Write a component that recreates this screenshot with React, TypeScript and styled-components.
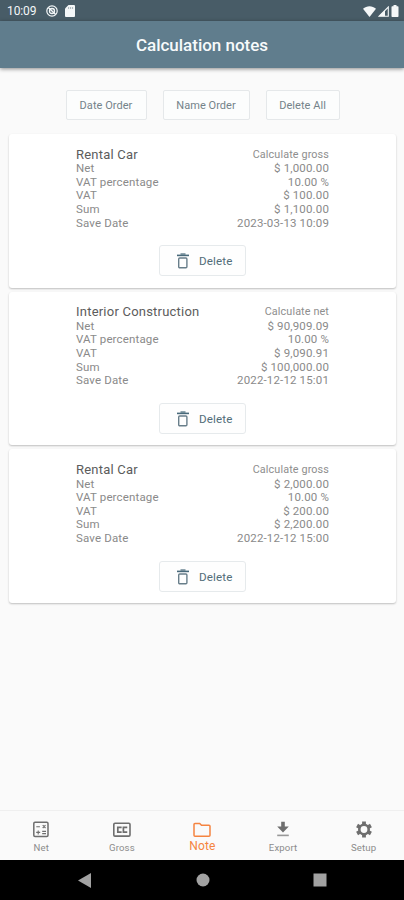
import React from "react";
import styled, { createGlobalStyle } from "styled-components";

const GlobalStyle = createGlobalStyle`
  * { box-sizing: border-box; }
  body { margin: 0; background: #fafafa; font-family: Roboto, sans-serif; }
  button { font-family: inherit; margin: 0; padding: 0; }
`;

const Screen = styled.div`
  width: 404px;
  height: 900px;
  display: flex;
  flex-direction: column;
  overflow: hidden;
  background: #fafafa;
`;

const StatusBar = styled.div`
  height: 21px;
  flex: none;
  display: flex;
  align-items: center;
  padding: 1px 5px 0 7px;
  background: #485c67;
  color: #f4f7f8;
`;

const Clock = styled.span`
  width: 39px;
  font-size: 12px;
  letter-spacing: -0.1px;
`;

const StatusIcons = styled.div<{ $end?: boolean }>`
  display: flex;
  align-items: center;
  gap: ${(p) => (p.$end ? "2px" : "7px")};
  margin-left: ${(p) => (p.$end ? "auto" : "0")};
  svg { display: block; }
`;

const AppBar = styled.header`
  height: 47px;
  flex: none;
  display: flex;
  align-items: center;
  justify-content: center;
  background: #607d8d;
  box-shadow: 0 1px 4px rgba(0, 0, 0, 0.45);
`;

const Title = styled.h1`
  margin: 1px 0 0;
  font-size: 17px;
  line-height: 20px;
  font-weight: 500;
  letter-spacing: -0.02px;
  color: #f7fafb;
`;

const Content = styled.main`
  flex: 1;
  padding: 22px 8px 0 9px;
`;

const OrderBar = styled.div`
  display: flex;
  justify-content: center;
  gap: 16px;
  margin-bottom: 14px;
`;

const OutlineButton = styled.button<{ $width: number }>`
  width: ${(p) => p.$width}px;
  height: 30px;
  display: flex;
  align-items: center;
  justify-content: center;
  border: 1px solid #e5e8ea;
  border-radius: 2px;
  background: #fcfdfd;
  color: #74838a;
  font-size: 11px;
  letter-spacing: 0.05px;
`;

const CardList = styled.div`
  display: flex;
  flex-direction: column;
  gap: 4px;
`;

const Card = styled.article`
  height: 153.7px;
  display: flex;
  flex-direction: column;
  align-items: center;
  padding-top: 12.6px;
  border-radius: 3px;
  background: #fff;
  box-shadow: 0 1px 2px rgba(0, 0, 0, 0.24);
`;

const Details = styled.div`
  width: 253px;
`;

const Row = styled.div<{ $heading?: boolean }>`
  height: ${(p) => (p.$heading ? "15.6px" : "13.6px")};
  display: flex;
  align-items: center;
  justify-content: space-between;
  line-height: 13.6px;
  font-size: 11.5px;
  letter-spacing: 0.15px;
  color: #8a8a8a;
  white-space: nowrap;
`;

const Name = styled.span`
  font-size: 13px;
  letter-spacing: 0.22px;
  color: #5c5c5c;
`;

const Mode = styled.span`
  font-size: 10.8px;
  letter-spacing: 0.12px;
  color: #8e8e8e;
`;

const Amount = styled.span`
  font-size: 11.5px;
  letter-spacing: 0.15px;
`;

const DeleteButton = styled.button`
  width: 87px;
  height: 31px;
  display: flex;
  align-items: center;
  gap: 9px;
  margin-top: 15px;
  padding: 1px 0 0 16px;
  border: 1px solid #e6eaec;
  border-radius: 3px;
  background: #fefefe;
  color: #526d79;
  font-size: 11.6px;
  letter-spacing: 0.15px;
  svg { display: block; }
`;

const TabBar = styled.nav`
  height: 50px;
  flex: none;
  display: grid;
  grid-template-columns: repeat(5, 1fr);
  padding-left: 1px;
  border-top: 1px solid #efefef;
`;

const Tab = styled.div<{ $active?: boolean }>`
  display: flex;
  flex-direction: column;
  align-items: center;
  padding-top: 9px;
  color: ${(p) => (p.$active ? "#f58440" : "#6e6e6e")};
  svg { display: block; width: 20px; height: 20px; }
`;

const TabLabel = styled.span<{ $active?: boolean }>`
  margin-top: ${(p) => (p.$active ? "0" : "1px")};
  font-size: ${(p) => (p.$active ? "12px" : "9.6px")};
  line-height: 13px;
  letter-spacing: 0.15px;
  color: ${(p) => (p.$active ? "#f58440" : "#8c8c8c")};
`;

const SystemBar = styled.div`
  height: 40px;
  flex: none;
  display: flex;
  align-items: center;
  justify-content: space-between;
  padding: 0 77px 0 78px;
  background: #000;
  svg { display: block; }
`;

const TrashIcon = () => (
  <svg width="14" height="16" viewBox="0 0 14 16" fill="none">
    <path d="M1 2.4h12" stroke="#48697a" strokeWidth="1.6" />
    <path d="M4.5 1h5" stroke="#48697a" strokeWidth="1.2" />
    <rect x="2.7" y="5" width="8.2" height="9.7" rx="1" stroke="#687e8a" strokeWidth="1.4" />
  </svg>
);

const CalculatorIcon = () => (
  <svg viewBox="0 0 20 20" fill="none" stroke="currentColor">
    <rect x="2.8" y="2.3" width="14.2" height="14.2" rx="1.2" strokeWidth="1.5" />
    <path d="M5.3 6.8h3.6M5.2 12.4h4M7.2 10.4v4M11.2 11.4h3.8M11.2 13.6h3.8M11.7 5.2l2.8 2.8M14.5 5.2l-2.8 2.8" strokeWidth="1.1" />
  </svg>
);

const CaptionIcon = () => (
  <svg viewBox="0 0 20 20" fill="none" stroke="currentColor">
    <rect x="1.8" y="3.2" width="16.2" height="12.9" rx="1.2" strokeWidth="1.6" />
    <path d="M8.8 8.2V7.3H5.8v4.8h3v-.9M14.4 8.2v-.9h-3v4.8h3v-.9" strokeWidth="1.7" />
  </svg>
);

const FolderIcon = () => (
  <svg viewBox="0 0 20 20" fill="none" stroke="currentColor">
    <path d="M3 3.4h4.7l1.8 1.8H17a1 1 0 0 1 1 1v9.1a1 1 0 0 1-1 1H3a1 1 0 0 1-1-1V4.4a1 1 0 0 1 1-1z" strokeWidth="1.5" />
  </svg>
);

const ExportIcon = () => (
  <svg viewBox="0 0 20 20" fill="currentColor">
    <path d="M8.2 1.8h3.6v4.8h4L10 12.6 4.2 6.6h4z" />
    <path d="M4.2 14.6h11.6v1.6H4.2z" opacity=".7" />
  </svg>
);

const GearIcon = () => (
  <svg viewBox="0 0 20 20" fill="none" stroke="currentColor">
    <circle cx="10" cy="9.5" r="4.7" strokeWidth="2.6" />
    <g strokeWidth="3.8">
      <path d="M10 1.5v3.2M10 14.3v3.2" />
      <path d="M10 1.5v3.2M10 14.3v3.2" transform="rotate(60 10 9.5)" />
      <path d="M10 1.5v3.2M10 14.3v3.2" transform="rotate(120 10 9.5)" />
    </g>
  </svg>
);

interface Note {
  name: string;
  mode: string;
  net: string;
  vat: string;
  sum: string;
  saved: string;
}

const notes: Note[] = [
  { name: "Rental Car", mode: "Calculate gross", net: "$ 1,000.00", vat: "$ 100.00", sum: "$ 1,100.00", saved: "2023-03-13 10:09" },
  { name: "Interior Construction", mode: "Calculate net", net: "$ 90,909.09", vat: "$ 9,090.91", sum: "$ 100,000.00", saved: "2022-12-12 15:01" },
  { name: "Rental Car", mode: "Calculate gross", net: "$ 2,000.00", vat: "$ 200.00", sum: "$ 2,200.00", saved: "2022-12-12 15:00" },
];

const tabs = [
  { label: "Net", icon: <CalculatorIcon /> },
  { label: "Gross", icon: <CaptionIcon /> },
  { label: "Note", icon: <FolderIcon />, active: true },
  { label: "Export", icon: <ExportIcon /> },
  { label: "Setup", icon: <GearIcon /> },
];

const NoteCard = ({ note }: { note: Note }) => {
  const rows = [
    ["Net", note.net],
    ["VAT percentage", "10.00 %"],
    ["VAT", note.vat],
    ["Sum", note.sum],
    ["Save Date", note.saved],
  ];
  return (
    <Card>
      <Details>
        <Row $heading>
          <Name>{note.name}</Name>
          <Mode>{note.mode}</Mode>
        </Row>
        {rows.map(([label, value]) => (
          <Row key={label}>
            <span>{label}</span>
            <Amount>{value}</Amount>
          </Row>
        ))}
      </Details>
      <DeleteButton>
        <TrashIcon />
        Delete
      </DeleteButton>
    </Card>
  );
};

export default function App() {
  return (
    <>
      <GlobalStyle />
      <Screen>
        <StatusBar>
          <Clock>10:09</Clock>
          <StatusIcons>
            <svg width="12" height="12" viewBox="0 0 12 12" fill="none" stroke="currentColor">
              <circle cx="6" cy="6" r="5.2" strokeWidth="1.2" />
              <circle cx="6" cy="6" r="2.5" strokeWidth="1.3" />
              <path d="M2.3 2.5l7.4 7" strokeWidth="1.3" />
            </svg>
            <svg width="10" height="12" viewBox="0 0 10 12">
              <path d="M3.5 0H9a1 1 0 0 1 1 1v10a1 1 0 0 1-1 1H1a1 1 0 0 1-1-1V3.5z" fill="currentColor" />
              <path d="M3.6 2v2M5.6 2v2M7.6 2v2" stroke="#8b999f" strokeWidth=".7" />
            </svg>
          </StatusIcons>
          <StatusIcons $end>
            <svg width="13" height="11" viewBox="0 0 13 11" fill="currentColor">
              <path d="M0 2.8C3.7-.7 9.3-.7 13 2.8L6.5 11z" />
            </svg>
            <svg width="11" height="11" viewBox="0 0 11 11">
              <path d="M10.3 1v9.3H1z" fill="none" stroke="currentColor" strokeWidth="1.1" />
              <path d="M7 4.3v6H1z" fill="currentColor" />
            </svg>
            <svg width="8" height="12" viewBox="0 0 8 12" fill="currentColor">
              <path d="M2.5 0h3v1.2h1.3c.4 0 .7.3.7.7v9.4c0 .4-.3.7-.7.7H1.2a.7.7 0 0 1-.7-.7V1.9c0-.4.3-.7.7-.7h1.3z" />
            </svg>
          </StatusIcons>
        </StatusBar>
        <AppBar>
          <Title>Calculation notes</Title>
        </AppBar>
        <Content>
          <OrderBar>
            <OutlineButton $width={81}>Date Order</OutlineButton>
            <OutlineButton $width={87}>Name Order</OutlineButton>
            <OutlineButton $width={74}>Delete All</OutlineButton>
          </OrderBar>
          <CardList>
            {notes.map((note) => (
              <NoteCard key={note.saved} note={note} />
            ))}
          </CardList>
        </Content>
        <TabBar>
          {tabs.map((tab) => (
            <Tab key={tab.label} $active={tab.active}>
              {tab.icon}
              <TabLabel $active={tab.active}>{tab.label}</TabLabel>
            </Tab>
          ))}
        </TabBar>
        <SystemBar>
          <svg width="14" height="15" viewBox="0 0 14 15"><path d="M0 7.5L13 0v15z" fill="#a2a2a2" /></svg>
          <svg width="14" height="14" viewBox="0 0 14 14"><circle cx="7" cy="7" r="6.5" fill="#a2a2a2" /></svg>
          <svg width="14" height="14" viewBox="0 0 14 14"><path d="M.5.5h13v13H.5z" fill="#a2a2a2" /></svg>
        </SystemBar>
      </Screen>
    </>
  );
}
